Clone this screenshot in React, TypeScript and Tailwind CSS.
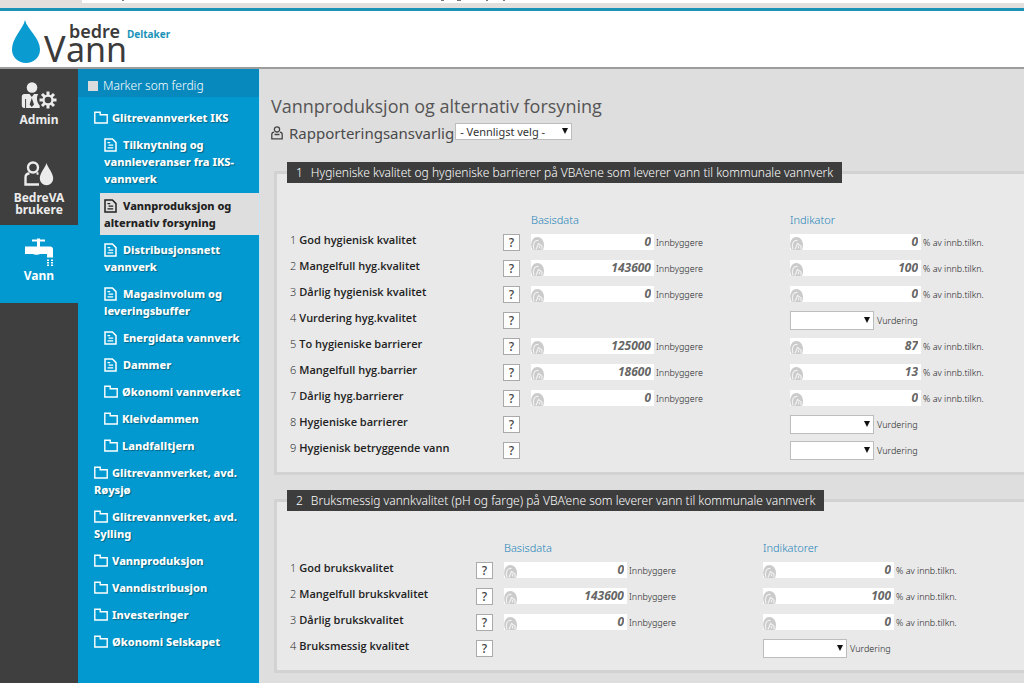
import { ReactNode } from 'react';
import clsx from 'clsx';

type NodeKind = 'folder' | 'page';

interface TreeNode {
  label: string;
  kind: NodeKind;
  level: 1 | 2;
  active?: boolean;
}

interface Row {
  label: string;
  basis?: string;
  indicator?: string;
}

interface SectionData {
  id: number;
  title: string;
  indicatorHeading: string;
  labelCol: string;
  rows: Row[];
}

const tree: TreeNode[] = [
  { label: 'Glitrevannverket IKS', kind: 'folder', level: 1 },
  { label: 'Tilknytning og vannleveranser fra IKS-vannverk', kind: 'page', level: 2 },
  { label: 'Vannproduksjon og alternativ forsyning', kind: 'page', level: 2, active: true },
  { label: 'Distribusjonsnett vannverk', kind: 'page', level: 2 },
  { label: 'Magasinvolum og leveringsbuffer', kind: 'page', level: 2 },
  { label: 'Energidata vannverk', kind: 'page', level: 2 },
  { label: 'Dammer', kind: 'page', level: 2 },
  { label: 'Økonomi vannverket', kind: 'folder', level: 2 },
  { label: 'Kleivdammen', kind: 'folder', level: 2 },
  { label: 'Landfalltjern', kind: 'folder', level: 2 },
  { label: 'Glitrevannverket, avd. Røysjø', kind: 'folder', level: 1 },
  { label: 'Glitrevannverket, avd. Sylling', kind: 'folder', level: 1 },
  { label: 'Vannproduksjon', kind: 'folder', level: 1 },
  { label: 'Vanndistribusjon', kind: 'folder', level: 1 },
  { label: 'Investeringer', kind: 'folder', level: 1 },
  { label: 'Økonomi Selskapet', kind: 'folder', level: 1 },
];

const sections: SectionData[] = [
  {
    id: 1,
    title: "Hygieniske kvalitet og hygieniske barrierer på VBA'ene som leverer vann til kommunale vannverk",
    indicatorHeading: 'Indikator',
    labelCol: 'w-[213px]',
    rows: [
      { label: 'God hygienisk kvalitet', basis: '0', indicator: '0' },
      { label: 'Mangelfull hyg.kvalitet', basis: '143600', indicator: '100' },
      { label: 'Dårlig hygienisk kvalitet', basis: '0', indicator: '0' },
      { label: 'Vurdering hyg.kvalitet' },
      { label: 'To hygieniske barrierer', basis: '125000', indicator: '87' },
      { label: 'Mangelfull hyg.barrier', basis: '18600', indicator: '13' },
      { label: 'Dårlig hyg.barrierer', basis: '0', indicator: '0' },
      { label: 'Hygieniske barrierer' },
      { label: 'Hygienisk betryggende vann' },
    ],
  },
  {
    id: 2,
    title: "Bruksmessig vannkvalitet (pH og farge) på VBA'ene som leverer vann til kommunale vannverk",
    indicatorHeading: 'Indikatorer',
    labelCol: 'w-[186px]',
    rows: [
      { label: 'God brukskvalitet', basis: '0', indicator: '0' },
      { label: 'Mangelfull brukskvalitet', basis: '143600', indicator: '100' },
      { label: 'Dårlig brukskvalitet', basis: '0', indicator: '0' },
      { label: 'Bruksmessig kvalitet' },
    ],
  },
];

function FolderIcon() {
  return (
    <svg viewBox="0 0 14 13" className="mr-1 inline-block h-[13px] w-[14px] align-[-2px]" fill="none" stroke="currentColor" strokeWidth="1.4">
      <path d="M.8 12V1.2h5.4v2.6h7V12z" />
    </svg>
  );
}

function PageIcon() {
  return (
    <svg viewBox="0 0 13 14" className="mr-1.5 inline-block h-[14px] w-[13px] align-[-3px]" fill="none" stroke="currentColor" strokeWidth="1.5">
      <path d="M1 1h7.4L12 4.6V13H1z" />
      <path d="M3.5 4.7h2.7M4.6 7.2h4.6M3.5 9.8h5.7" strokeWidth="1.3" />
    </svg>
  );
}

function AdminIcon() {
  return (
    <svg viewBox="0 0 36 27" className="h-[27px] w-9" fill="currentColor">
      <circle cx="11" cy="5.5" r="5.3" />
      <path fillRule="evenodd" d="M3.5 12h5l2.3 3 2.3-3h4.2c-1.8 2.4-2 8 1.4 11.5V26H3.5C1 26 .8 24.5.8 23v-8c0-1.8.8-3 2.7-3zM10.8 16l-2.2 6.5 2.2 2.5 2.2-2.5z" />
      <path d="M4.6 17v9" stroke="#3f3f3f" strokeWidth="1" />
      <g transform="translate(27 18)" stroke="currentColor" strokeWidth="3">
        <path d="M0-8.5V8.5M-8.5 0H8.5M-6-6L6 6M-6 6L6-6" />
        <circle r="5.6" stroke="none" />
        <circle r="3.3" fill="#3f3f3f" stroke="none" />
      </g>
    </svg>
  );
}

function UserDropIcon() {
  return (
    <svg viewBox="0 0 30 26" className="h-[26px] w-[30px]" fill="none" stroke="currentColor" strokeWidth="2.4">
      <circle cx="9" cy="6.5" r="5" />
      <path d="M5.5 12.5C2.5 12.5 1.5 14 1.5 16.5V23.5H15M12.5 12.5h2" />
      <path d="M22.5 2c1.5 5 6.7 10 6.7 15.5a6.7 6.7 0 0 1-13.4 0C15.8 12 21 7 22.5 2z" fill="currentColor" stroke="none" />
    </svg>
  );
}

function TapIcon() {
  return (
    <svg viewBox="0 0 30 28" className="h-7 w-[30px]" fill="currentColor">
      <path d="M8 1.5h5V.5h3v1h5v2h-5V8.500H26c2 0 3 1 3 3v8h-6v-3.500H16c-1 1-6 1-7 0H1v-7.500h12V3.500H8z" />
      <path d="M23 21.5h2v1.5h-2zM27 21.5h2v1.5h-2zM23 24h2v1.5h-2zM27 24h2v1.5h-2zM23 26.5h2V28h-2zM27 26.5h2V28h-2z" />
    </svg>
  );
}

function PersonIcon() {
  return (
    <svg viewBox="0 0 12 14" className="h-[14px] w-3" fill="none" stroke="#444" strokeWidth="1.3">
      <circle cx="6" cy="3.4" r="2.6" />
      <path d="M3.2 6.2C1.4 6.2.8 7 .8 8.6v4.2h10.4V8.6c0-1.6-.6-2.4-2.4-2.4M3.5 8.5h5" />
    </svg>
  );
}

function SourceIcon() {
  return (
    <svg viewBox="0 0 13 13" className="h-[13px] w-[13px] shrink-0 self-end">
      <path d="M1.5 13C-1.5 7 1 0 6.5 0S14.5 7 12 13z" fill="#cbcbcb" />
      <path d="M3 12.5C1.5 7 3 3 7.5 3.5M5 12.5l2.5-6 3.5 2.5v3.5M8.5 9v2.5" fill="none" stroke="#f2f2f2" strokeWidth="1.2" />
    </svg>
  );
}

function Logo() {
  return (
    <svg viewBox="0 0 180 56" className="h-14 w-[180px] overflow-visible" role="img" aria-label="bedre Vann">
      <path d="M13 9c2 9 15 18 15 29.500C28 46.500 21.500 52 14 52S0 46.500 0 38.500C0 27 11 18 13 9z" fill="#0a9bd0" />
      <g fill="#3b3b3b" fontFamily="Noto Sans, Open Sans, sans-serif">
        <text x="32" y="51" fontSize="36">V</text>
        <text x="54" y="51" fontSize="34">ann</text>
        <text x="57" y="27" fontSize="18" fontWeight="600">bedre</text>
      </g>
      <text x="115" y="27" fontSize="10" fontWeight="700" fill="#1b93b8" fontFamily="Noto Sans, Open Sans, sans-serif">Deltaker</text>
    </svg>
  );
}

function NavItem({ icon, label, active }: { icon: ReactNode; label: string; active?: boolean }) {
  return (
    <a
      href="#"
      className={clsx(
        'flex h-[78px] flex-col items-center px-2 pt-3 text-center text-[12px] leading-3 font-bold',
        active ? 'bg-[#0199cf] text-white' : 'text-[#ececec]',
      )}
    >
      <span className="mb-1 flex h-[29px] items-center">{icon}</span>
      {label}
    </a>
  );
}

function Caret() {
  return (
    <svg viewBox="0 0 6 6" className="pointer-events-none absolute top-1/2 right-1 size-1.5 -translate-y-1/2">
      <path d="M0 0h6L3 6z" fill="#111" />
    </svg>
  );
}

function NumberField({ value, unit, label }: { value: string; unit: string; label: string }) {
  return (
    <div className="flex items-center">
      <div className="flex h-4 w-full bg-white">
        <SourceIcon />
        <input
          type="text"
          defaultValue={value}
          aria-label={label}
          className="w-full min-w-0 bg-transparent pr-[3px] text-right text-[12px] leading-4 font-bold text-[#666] italic outline-none"
        />
      </div>
      <span className="w-0 pt-0.5 pl-[2px] text-[9px] leading-4 font-light whitespace-nowrap text-[#222]">{unit}</span>
    </div>
  );
}

function RatingField({ label }: { label: string }) {
  return (
    <div className="flex items-center">
      <div className="relative w-[84px]">
        <select aria-label={label} className="block h-[19px] w-full appearance-none border border-[#bdbdbd] bg-white text-[11px]">
          <option />
        </select>
        <Caret />
      </div>
      <span className="pt-0.5 pl-[3px] text-[9px] font-light whitespace-nowrap text-[#222]">Vurdering</span>
    </div>
  );
}

function Section({ section }: { section: SectionData }) {
  return (
    <fieldset className="min-w-0 border-[3px] border-r-0 border-[#d2d2d2] bg-[#e9e9e9] pr-5 pb-[9px] pl-[13px]">
      <legend className="-ml-[3px] h-[21px] bg-[#3d3d3d] px-[9px] text-[12px] leading-[21px] font-light whitespace-nowrap text-white">
        <span className="mr-2">{section.id}</span>
        {section.title}
      </legend>
      <table className="mt-[27px] table-fixed">
        <colgroup>
          <col className={section.labelCol} />
          <col className="w-7" />
          <col className="w-[125px]" />
          <col className="w-[134px]" />
          <col className="w-[133px]" />
        </colgroup>
        <thead>
          <tr className="h-[19px] text-left align-middle text-[11px] leading-4 text-[#2383b8]">
            <td />
            <td />
            <th scope="col" className="font-light">Basisdata</th>
            <td />
            <th scope="col" className="font-light">{section.indicatorHeading}</th>
          </tr>
        </thead>
        <tbody>
          {section.rows.map((row, i) => (
            <tr key={row.label} className="h-[26px]">
              <th scope="row" className="pb-1 text-left font-['Open_Sans',sans-serif] text-[11px] leading-4 font-semibold whitespace-nowrap text-[#222]">
                <span className="mr-[3px] font-light">{i + 1}</span>
                {row.label}
              </th>
              <td>
                <button type="button" className="block size-[17px] border border-[#aaa] bg-white text-[12px] leading-[15px] font-medium text-[#444]">
                  ?
                </button>
              </td>
              <td>{row.basis && <NumberField value={row.basis} unit="Innbyggere" label={`${row.label}, basisdata`} />}</td>
              <td />
              <td>
                {row.indicator ? (
                  <NumberField value={row.indicator} unit="% av innb.tilkn." label={`${row.label}, indikator`} />
                ) : (
                  <RatingField label={`${row.label}, vurdering`} />
                )}
              </td>
            </tr>
          ))}
        </tbody>
      </table>
    </fieldset>
  );
}

export default function App() {
  return (
    <div className="flex min-h-screen flex-col overflow-hidden bg-[#dedede] font-['Noto_Sans','Open_Sans',sans-serif]">
      <div className="h-2 bg-[#e2dfdd] pl-[82px]">
        <div className="h-[3px] bg-white">
          <svg viewBox="0 0 440 3" className="h-[3px] w-[440px]" fill="#777">
            <path d="M40 0h2v1h-2zM359 0h3v1h-3zM375 0h4v1h-4zM404 0h2v1h-2zM421 0h2v1h-2z" />
          </svg>
        </div>
      </div>
      <header className="border-t-[3px] border-b-2 border-t-[#1b93b8] border-b-[#9c9c9c] bg-white pl-3">
        <Logo />
      </header>
      <div className="flex flex-1">
        <nav className="w-[78px] shrink-0 bg-[#3f3f3f]">
          <NavItem icon={<AdminIcon />} label="Admin" />
          <NavItem icon={<UserDropIcon />} label="BedreVA brukere" />
          <NavItem icon={<TapIcon />} label="Vann" active />
        </nav>
        <aside className="w-[182px] shrink-0 border-r border-[#c5e4f2] bg-[#0199cf] text-white">
          <label className="flex h-7 items-center gap-[5px] bg-[#0889bd] pt-1.5 pl-2.5 text-[12px] font-light">
            <input type="checkbox" className="size-[10px] appearance-none bg-[#dcdcdc]" />
            Marker som ferdig
          </label>
          <ul className="flex flex-col gap-0.5 pt-2 text-[11px] leading-[17px] font-extrabold">
            {tree.map((node) => (
              <li
                key={node.label}
                className={clsx(
                  'py-1 pr-3',
                  node.level === 1 ? 'pl-4' : 'ml-[22px] pl-1',
                  node.active ? 'bg-[#dedede] text-[#222]' : 'text-shadow-[1px_1px_1px_rgba(0,0,0,0.35)]',
                )}
              >
                <a href="#" className="block">
                  {node.kind === 'folder' ? <FolderIcon /> : <PageIcon />}
                  {node.label}
                </a>
              </li>
            ))}
          </ul>
        </aside>
        <main className="min-w-0 flex-1 pt-[25px]">
          <h1 className="pl-[11px] font-['Open_Sans',sans-serif] text-[18px] leading-6 text-[#555]">Vannproduksjon og alternativ forsyning</h1>
          <div className="mt-[3px] flex h-6 items-center pl-[11px] text-[#4a4a4a]">
            <PersonIcon />
            <label htmlFor="responsible" className="ml-1.5 text-[15px]">Rapporteringsansvarlig</label>
            <div className="relative ml-px w-[117px] self-start pt-0.5">
              <select id="responsible" className="block h-[17px] w-full appearance-none border border-[#bdbdbd] bg-white pl-1 text-[11px] leading-[15px] text-[#333]">
                <option>- Vennligst velg -</option>
              </select>
              <Caret />
            </div>
          </div>
          <div className="mt-[17px] flex flex-col gap-[15px] pl-3.5">
            {sections.map((section) => (
              <Section key={section.id} section={section} />
            ))}
          </div>
        </main>
      </div>
    </div>
  );
}
